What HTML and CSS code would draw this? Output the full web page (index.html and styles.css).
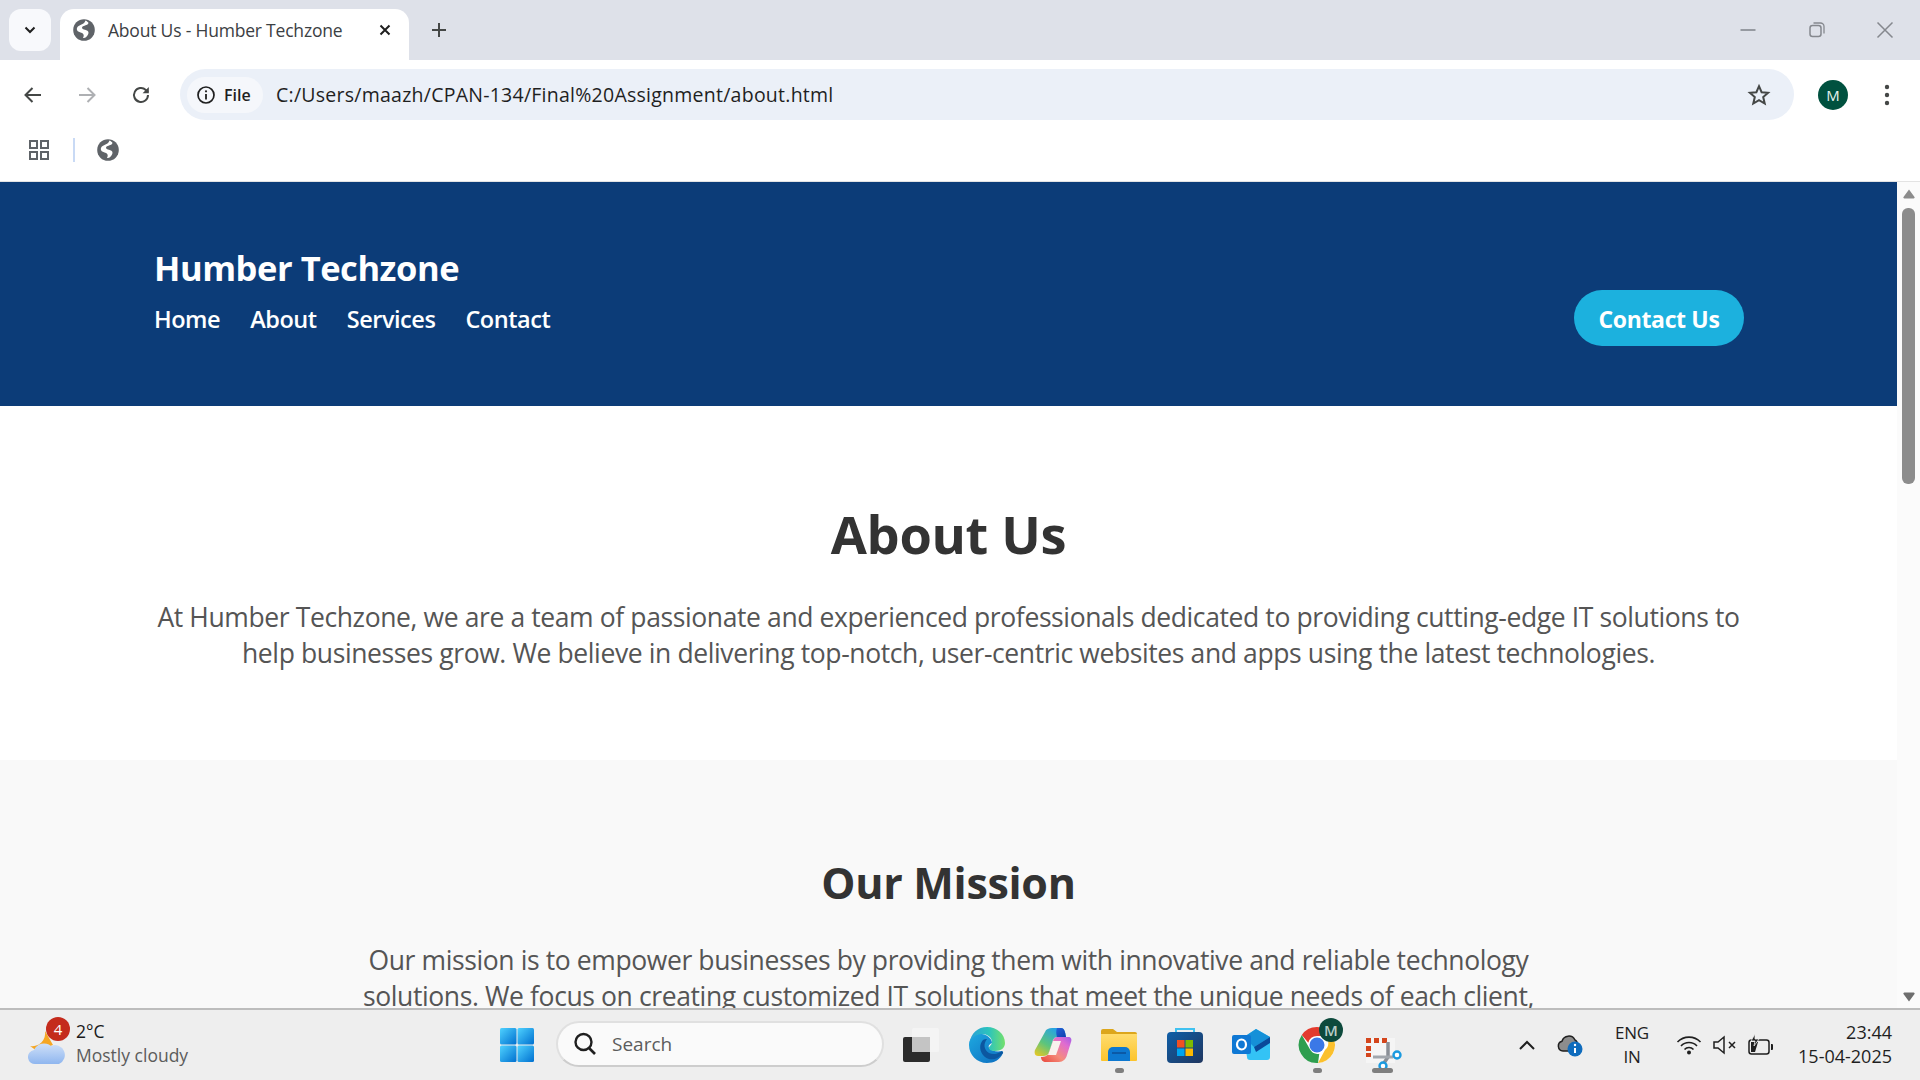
FILE: index.html
```html
<!DOCTYPE html>
<html lang="en">
<head>
<meta charset="utf-8">
<title>About Us - Humber Techzone</title>
<link rel="stylesheet" href="styles.css">
</head>
<body>
<svg class="defs" width="0" height="0">
  <defs>
    <symbol id="globe" viewBox="0 0 22 22">
      <circle cx="11" cy="11" r="10.800" fill="#5f6368"/>
      <path d="M12.500 1.500c1.500.8 2.500 1.500 3 2.500-.5 1.500-2 2-3.500 2.500-1.500.5-3 1-3 2.300 0 1.200 1.500 1.700 3 2 1.800.4 3.500 1.200 3.500 3 0 2-1.500 3-2.500 4.500-1 .8-2 .9-3 .7.500-1.200 1-2.300.5-3.500-.5-1.200-2-1.700-3.500-2.200C5.500 12.800 3.800 12 3.800 10c0-2 1.700-3.200 3.700-4 2-.8 4.200-1.700 5-4.500z" fill="#fff"/>
    </symbol>
    <linearGradient id="g-win" x1="0" y1="0" x2="1" y2="1"><stop offset="0" stop-color="#4fd2ff"/><stop offset="1" stop-color="#0070d0"/></linearGradient>
    <linearGradient id="g-edge" x1="0" y1="0" x2="1" y2="1"><stop offset="0" stop-color="#1ea9e0"/><stop offset="1" stop-color="#0d6cbf"/></linearGradient>
    <linearGradient id="g-edge2" x1="0" y1="0" x2="1" y2="0"><stop offset="0" stop-color="#2a9fd8"/><stop offset=".55" stop-color="#2cc4bc"/><stop offset="1" stop-color="#74e06c"/></linearGradient>
    <linearGradient id="g-folder" x1="0" y1="0" x2="0" y2="1"><stop offset="0" stop-color="#ffdc6e"/><stop offset="1" stop-color="#fcc42c"/></linearGradient>
    <linearGradient id="g-store" x1="0" y1="0" x2="1" y2="1"><stop offset="0" stop-color="#0f5fa8"/><stop offset="1" stop-color="#20365f"/></linearGradient>
    <linearGradient id="g-cloud" x1="0" y1="0" x2="0" y2="1"><stop offset="0" stop-color="#cfe0f8"/><stop offset="1" stop-color="#8fb6ef"/></linearGradient>
    <linearGradient id="g-cop1" x1="0" y1="0" x2="1" y2="1"><stop offset="0" stop-color="#2563d8"/><stop offset="1" stop-color="#0f3fae"/></linearGradient>
    <linearGradient id="g-cop2" x1="0" y1="1" x2=".7" y2="0"><stop offset="0" stop-color="#f2c81c"/><stop offset=".45" stop-color="#5cc57c"/><stop offset="1" stop-color="#22a0ec"/></linearGradient>
    <linearGradient id="g-cop3" x1="0" y1="1" x2="1" y2="0"><stop offset="0" stop-color="#e8463a"/><stop offset=".4" stop-color="#f58c7c"/><stop offset=".75" stop-color="#e06cd0"/><stop offset="1" stop-color="#a25ce8"/></linearGradient>
  </defs>
</svg>

<div class="browser-top">
  <div class="tabstrip">
    <div class="tab-search">
      <svg width="14" height="14" viewBox="0 0 14 14"><path d="M2.500 4.500 7 9l4.500-4.500" fill="none" stroke="#1f1f1f" stroke-width="2"/></svg>
    </div>
    <div class="tab">
      <svg class="fav" width="22" height="22"><use href="#globe"/></svg>
      <span class="tab-title">About Us - Humber Techzone</span>
      <svg class="tab-close" width="14" height="14" viewBox="0 0 14 14"><path d="M2.500 2.500l9 9M11.500 2.500l-9 9" stroke="#1f1f1f" stroke-width="2"/></svg>
    </div>
    <svg class="new-tab" width="18" height="18" viewBox="0 0 18 18"><path d="M9 2v14M2 9h14" stroke="#444746" stroke-width="2"/></svg>
    <div class="win-btns">
      <svg width="18" height="18" viewBox="0 0 18 18"><path d="M1.500 9h15" stroke="#85888e" stroke-width="1.600"/></svg>
      <svg width="18" height="18" viewBox="0 0 18 18"><rect x="2" y="4.500" width="11" height="11" rx="2.500" fill="none" stroke="#85888e" stroke-width="1.500"/><path d="M5.500 2h7a3.500 3.500 0 0 1 3.500 3.500v7" fill="none" stroke="#85888e" stroke-width="1.300"/></svg>
      <svg width="18" height="18" viewBox="0 0 18 18"><path d="M1.500 1.500l15 15M16.500 1.500l-15 15" stroke="#85888e" stroke-width="1.500"/></svg>
    </div>
  </div>
  <div class="toolbar">
    <svg class="tool" width="22" height="22" viewBox="0 0 22 22"><path d="M19 11H4M10.500 4 3.500 11l7 7" fill="none" stroke="#444746" stroke-width="2"/></svg>
    <svg class="tool" width="22" height="22" viewBox="0 0 22 22"><path d="M3 11h15M11.500 4l7 7-7 7" fill="none" stroke="#aeb0b3" stroke-width="2"/></svg>
    <svg class="tool" width="22" height="22" viewBox="0 0 22 22"><path d="M18 11a7 7 0 1 1-2.200-5.100L18 8" fill="none" stroke="#444746" stroke-width="2"/><path d="M18.800 3v6.200h-6.200z" fill="#444746"/></svg>
    <div class="omnibox">
      <div class="chip">
        <svg width="20" height="20" viewBox="0 0 20 20"><circle cx="10" cy="10" r="8" fill="none" stroke="#1f1f1f" stroke-width="1.700"/><path d="M10 9v5.500" stroke="#1f1f1f" stroke-width="1.800"/><circle cx="10" cy="6.300" r="1.100" fill="#1f1f1f"/></svg>
        <span>File</span>
      </div>
      <span class="url">C:/Users/maazh/CPAN-134/Final%20Assignment/about.html</span>
      <svg class="star" width="24" height="24" viewBox="0 0 24 24"><path d="M12 3.200l2.600 6 6.500.6-4.900 4.300 1.500 6.400-5.700-3.400-5.700 3.400 1.500-6.400-4.900-4.300 6.500-.6z" fill="none" stroke="#444746" stroke-width="2" stroke-linejoin="miter"/></svg>
    </div>
    <div class="avatar">M</div>
    <svg class="kebab" width="6" height="24" viewBox="0 0 6 24"><circle cx="3" cy="4" r="2.200" fill="#444746"/><circle cx="3" cy="12" r="2.200" fill="#444746"/><circle cx="3" cy="20" r="2.200" fill="#444746"/></svg>
  </div>
  <div class="bookmarks">
    <svg width="22" height="22" viewBox="0 0 22 22"><g fill="none" stroke="#5f6368" stroke-width="2"><rect x="2" y="2" width="7" height="7"/><rect x="13" y="2" width="7" height="7"/><rect x="2" y="13" width="7" height="7"/><rect x="13" y="13" width="7" height="7"/></g></svg>
    <span class="bm-sep"></span>
    <svg width="22" height="22"><use href="#globe"/></svg>
  </div>
</div>

<div class="viewport">
  <div class="page">
    <header class="site-header">
      <div class="brand-col">
        <div class="brand">Humber Techzone</div>
        <nav class="nav"><a>Home</a><a>About</a><a>Services</a><a>Contact</a></nav>
      </div>
      <a class="cta">Contact Us</a>
    </header>
    <section class="about">
      <h1>About Us</h1>
      <p>At Humber Techzone, we are a team of passionate and experienced professionals dedicated to providing cutting-edge IT solutions to help businesses grow. We believe in delivering top-notch, user-centric websites and apps using the latest technologies.</p>
    </section>
    <section class="mission">
      <h2>Our Mission</h2>
      <p>Our mission is to empower businesses by providing them with innovative and reliable technology solutions. We focus on creating customized IT solutions that meet the unique needs of each client,</p>
    </section>
  </div>
  <div class="scrollbar">
    <svg width="14" height="11" viewBox="0 0 14 11"><path d="M7 1.500l5.500 7.500a1 1 0 0 1-1 1.500h-9a1 1 0 0 1-1-1.500z" fill="#8c8c8c"/></svg>
    <div class="thumb"></div>
    <svg class="sb-down" width="14" height="11" viewBox="0 0 14 11"><path d="M7 9.500L12.500 2a1 1 0 0 0-1-1.500h-9a1 1 0 0 0-1 1.500z" fill="#6e6e6e"/></svg>
  </div>
</div>

<footer class="taskbar">
  <div class="weather">
    <div class="weather-icon">
      <svg width="38" height="36" viewBox="0 0 38 36"><path d="M17 2a13 13 0 0 1-15 15l7 5 16-6z" fill="#f5a623"/><path d="M8 35a7 7 0 0 1-2-14 11 11 0 0 1 17-4 9 9 0 0 1 8 18z" fill="url(#g-cloud)"/></svg>
      <span class="w-badge">4</span>
    </div>
    <div class="w-text"><div class="w-temp">2°C</div><div class="w-cond">Mostly cloudy</div></div>
  </div>
  <div class="slot">
    <svg width="36" height="36" viewBox="0 0 36 36"><g fill="url(#g-win)"><rect x="1" y="1" width="16.500" height="16.500" rx="1.500"/><rect x="18.500" y="1" width="16.500" height="16.500" rx="1.500"/><rect x="1" y="18.500" width="16.500" height="16.500" rx="1.500"/><rect x="18.500" y="18.500" width="16.500" height="16.500" rx="1.500"/></g></svg>
  </div>
  <div class="searchbox">
    <svg width="24" height="24" viewBox="0 0 24 24"><circle cx="10.500" cy="10" r="8" fill="none" stroke="#1f1f1f" stroke-width="2.400"/><path d="M16 16l6 6" stroke="#1f1f1f" stroke-width="2.600"/></svg>
    <span>Search</span>
  </div>
  <div class="slot">
    <svg width="38" height="36" viewBox="0 0 38 36"><rect x="1" y="10" width="27" height="25" rx="2" fill="#2b2b2b"/><rect x="10" y="1" width="27" height="24" rx="1.500" fill="#f4f4f4" fill-opacity=".85"/><rect x="10" y="10" width="18" height="15" fill="#c4c4c4"/></svg>
  </div>
  <div class="slot">
    <svg width="38" height="38" viewBox="0 0 38 38">
      <path d="M1 19C1 12 7 7 14 8c6 1 10 5 10 9-3 1-4 3-3 5 2 3 8 4 13 3l1 2c-3 7-9 10-16 10C9 37 1 29 1 19z" fill="url(#g-edge)"/>
      <path d="M1.500 17C3 7 10 1 19 1c10 0 18 7 18 16 0 5-4 8-10 8-4 0-6-1-6-3 0-2 3-3 3-6 0-5-5-8-10-8C8 8 3 12 1.500 17z" fill="url(#g-edge2)"/>
      <path d="M15 14c-4 4-4 12 2 17 5 4 13 3 18-4 .5-1-.5-2-1.500-1.500C30 28 25 29 21 27c-5-3-6-9-2-14-1 0-3 0-4 1z" fill="#0c57a0"/>
    </svg>
  </div>
  <div class="slot">
    <svg width="38" height="36" viewBox="0 0 38 36">
      <path d="M23 10h11c3 0 4 2 3 5l-4 13c-1 4-4 7-8 7H12c-3 0-5-2-5-5 4 0 7-1 8-5l4-11c1-3 2-4 4-4z" fill="url(#g-cop3)"/>
      <path d="M19 14h8l-5 14h-8z" fill="#f8f2ee"/>
      <path d="M11 5c1-3 4-4 7-4h9c3 0 4 3 5 9h-9c-2 0-3 1-4 3l-4 12c-1 3-3 4-6 4H4c-3 0-4-3-3-6z" fill="url(#g-cop2)"/>
      <path d="M23 1h4c3 0 4 3 5 9h-9c-1-3-1-7 0-9z" fill="url(#g-cop1)"/>
    </svg>
  </div>
  <div class="slot">
    <svg width="36" height="34" viewBox="0 0 36 34"><path d="M0 3a2 2 0 0 1 2-2h10l4 3h18a2 2 0 0 1 2 2v6H0z" fill="#dca61c"/><path d="M0 6h36v26a1 1 0 0 1-1 1H1a1 1 0 0 1-1-1z" fill="url(#g-folder)"/><path d="M7 33V24a5 5 0 0 1 5-5h12a5 5 0 0 1 5 5v9z" fill="#0d78d0"/><path d="M11 25h14" stroke="#0b4f98" stroke-width="1.500"/></svg>
    <span class="ind"></span>
  </div>
  <div class="slot">
    <svg width="36" height="36" viewBox="0 0 36 36"><path d="M9 7V2h18v5" fill="none" stroke="#3fc1f0" stroke-width="2"/><rect x="0" y="5" width="36" height="31" rx="4" fill="url(#g-store)"/><rect x="10" y="13" width="7.500" height="7.500" fill="#f25022"/><rect x="18.500" y="13" width="7.500" height="7.500" fill="#7fba00"/><rect x="10" y="21.500" width="7.500" height="7.500" fill="#00a4ef"/><rect x="18.500" y="21.500" width="7.500" height="7.500" fill="#ffb900"/></svg>
  </div>
  <div class="slot">
    <svg width="38" height="32" viewBox="0 0 38 32"><path d="M12 8l12-8 14 8v20a3 3 0 0 1-3 3H18a3 3 0 0 1-3-3z" fill="#33c3f5"/><path d="M12 8l12-8 14 8-16 10z" fill="#1590d8"/><path d="M22 18l16-10v6L24 23z" fill="#0a4a9a"/><rect x="0" y="6" width="19" height="19" rx="2" fill="#0f78d4"/><ellipse cx="9.500" cy="15.500" rx="4.500" ry="5" fill="none" stroke="#fff" stroke-width="2.200"/></svg>
  </div>
  <div class="slot">
    <svg width="38" height="38" viewBox="0 0 38 38"><circle cx="19" cy="19" r="18" fill="#fff"/><path d="M19 1a18 18 0 0 1 15.600 9H19a9 9 0 0 0-8.700 6.700L3.800 9A18 18 0 0 1 19 1z" fill="#e33b2e"/><path d="M34.600 10A18 18 0 0 1 20 37l7-13a9 9 0 0 0 0-14z" fill="#fbc02d"/><path d="M3.800 9l8 14a9 9 0 0 0 9.500 4.700L20 37A18 18 0 0 1 3.800 9z" fill="#2e9e4f"/><circle cx="19" cy="19" r="7.500" fill="#3b78e7"/></svg>
    <span class="chrome-badge">M</span>
    <span class="ind"></span>
  </div>
  <div class="slot">
    <svg class="snip" width="40" height="36" viewBox="0 0 40 36">
      <rect x="3" y="3" width="29" height="25" fill="#f5f5f5"/>
      <g fill="#d4451c"><rect x="3" y="3" width="5" height="5"/><rect x="11" y="3" width="5" height="5"/><rect x="19" y="3" width="5" height="5"/><rect x="3" y="11" width="5" height="5"/><rect x="3" y="18" width="5" height="4"/></g>
      <path d="M25 7v15M25 22l-4 6" fill="none" stroke="#8a8f96" stroke-width="3.500"/>
      <path d="M10 22h20" stroke="#a2a7ad" stroke-width="3"/>
      <circle cx="34" cy="20" r="3.500" fill="#fff" stroke="#1a9ae0" stroke-width="2.400"/>
      <circle cx="20" cy="31" r="3.500" fill="#fff" stroke="#1a9ae0" stroke-width="2.400"/>
    </svg>
    <span class="ind ind-wide"></span>
  </div>
  <div class="tray">
    <div class="t-chev"><svg width="18" height="12" viewBox="0 0 18 12"><path d="M2 10l7-7 7 7" fill="none" stroke="#1f1f1f" stroke-width="2"/></svg></div>
    <div class="t-od"><svg width="26" height="24" viewBox="0 0 26 24"><path d="M6 18a5 5 0 0 1-1-9.800A7 7 0 0 1 18 7a5 5 0 0 1 2 2v5l-6 4z" fill="#8d8d8d" stroke="#1f1f1f" stroke-width="1.500"/><circle cx="18" cy="16" r="7.500" fill="#0f6cbd"/><path d="M18 15v5" stroke="#fff" stroke-width="2"/><circle cx="18" cy="12" r="1.200" fill="#fff"/></svg></div>
    <div class="t-lang"><div>ENG</div><div>IN</div></div>
    <div class="t-ico"><svg width="26" height="20" viewBox="0 0 26 20"><g fill="none" stroke="#1f1f1f" stroke-width="1.600"><path d="M1.500 7a16 16 0 0 1 23 0"/><path d="M5 11a11 11 0 0 1 16 0"/><path d="M8.500 14.500a6 6 0 0 1 9 0"/></g><circle cx="13" cy="17.500" r="2" fill="#1f1f1f"/></svg></div>
    <div class="t-ico"><svg width="24" height="20" viewBox="0 0 24 20"><path d="M1 7h4l6-5v16l-6-5H1z" fill="none" stroke="#1f1f1f" stroke-width="1.500"/><path d="M16 7l6 6M22 7l-6 6" stroke="#1f1f1f" stroke-width="1.500"/></svg></div>
    <div class="t-ico"><svg width="26" height="24" viewBox="0 0 26 24"><rect x="1" y="7" width="20" height="14" rx="2.500" fill="none" stroke="#1f1f1f" stroke-width="1.500"/><path d="M23 11h1a1 1 0 0 1 1 1v4a1 1 0 0 1-1 1h-1z" fill="#1f1f1f"/><path d="M3 9h7l-3 10H3z" fill="#1f1f1f"/><path d="M7 1L3 8h4l-1 5 5-7H7z" fill="#1f1f1f" stroke="#eee" stroke-width=".8"/></svg></div>
    <div class="t-clock"><div>23:44</div><div>15-04-2025</div></div>
  </div>
</footer>
</body>
</html>
```
FILE: styles.css
```css
* { box-sizing: border-box; }
html, body { margin: 0; height: 100%; }
body {
  height: 1080px;
  overflow: hidden;
  display: flex;
  flex-direction: column;
  font-family: "Open Sans", "Noto Sans", "Liberation Sans", sans-serif;
  background: #fff;
}
.defs { position: absolute; }

/* Browser chrome */
.browser-top { flex: none; height: 182px; background: #fff; border-bottom: 1px solid #e3e3e3; }
.tabstrip {
  height: 60px;
  background: #dee1e9;
  display: flex;
  align-items: flex-start;
  padding: 9px 0 0 9px;
}
.tab-search {
  width: 42px;
  height: 42px;
  background: #f8f9fc;
  border-radius: 12px;
  display: flex;
  align-items: center;
  justify-content: center;
}
.tab {
  width: 349px;
  height: 51px;
  margin-left: 9px;
  background: #fff;
  border-radius: 14px 14px 0 0;
  display: flex;
  align-items: center;
  padding: 0 17px 9px 13px;
}
.fav { flex: none; }
.tab-title { margin-left: 13px; font-size: 17.500px; color: #3c4043; flex: 1; letter-spacing: -0.2px; white-space: nowrap; }
.new-tab { margin: 12px 0 0 21px; }
.win-btns {
  margin-left: auto;
  width: 190px;
  height: 40px;
  padding: 1px 26px 0 9px;
  display: flex;
  justify-content: space-between;
  align-items: center;
}
.win-btns svg { flex: none; }
.toolbar {
  height: 75px;
  border-radius: 12px 12px 0 0;
  display: flex;
  align-items: center;
  padding: 0 0 6px 22px;
}
.tool { margin-right: 32px; flex: none; }
.omnibox {
  margin-left: -4px;
  width: 1614px;
  height: 51px;
  border-radius: 26px;
  background: #ebf0f8;
  display: flex;
  align-items: center;
  padding: 0 23px 0 7px;
}
.chip {
  width: 76px;
  height: 36px;
  border-radius: 18px;
  background: #f5f7fb;
  display: flex;
  align-items: center;
  padding-left: 9px;
  gap: 8px;
  font-size: 16px;
  font-weight: 600;
  color: #1f1f1f;
}
.url { margin-left: 13px; font-size: 19.500px; color: #1f1f1f; letter-spacing: 0.25px; white-space: nowrap; flex: 1; }
.star { flex: none; }
.avatar {
  width: 30px;
  height: 30px;
  margin-left: 24px;
  border-radius: 50%;
  background: #00513f;
  color: #e6f2ee;
  font-size: 15px;
  display: flex;
  align-items: center;
  justify-content: center;
  flex: none;
}
.kebab { margin-left: 36px; flex: none; }
.bookmarks {
  height: 46px;
  display: flex;
  align-items: center;
  padding: 0 0 16px 28px;
}
.bm-sep { width: 2px; height: 24px; background: #c9daf5; margin: 0 22px 0 23px; }

/* Page + scrollbar */
.viewport { flex: none; height: 826px; display: flex; overflow: hidden; }
.page { width: 1897px; flex: none; overflow: hidden; background: #f9f9f9; }
.scrollbar {
  flex: 1;
  background: #fbfbfb;
  display: flex;
  flex-direction: column;
  align-items: center;
  padding-top: 6px;
  padding-bottom: 5px;
}
.thumb { width: 13px; height: 276px; margin-top: 9px; background: #8c8c8c; border-radius: 6px; }
.sb-down { margin-top: auto; }

.site-header {
  height: 224px;
  background: #0c3c78;
  color: #fff;
  display: flex;
  justify-content: space-between;
  align-items: flex-start;
  padding: 62px 153px 0 154px;
}
.brand { font-size: 34.500px; font-weight: 700; line-height: 48px; letter-spacing: -0.45px; }
.nav { display: flex; gap: 30px; margin-top: 11px; font-size: 23.500px; font-weight: 600; line-height: 32px; letter-spacing: -0.45px; }
.cta {
  margin-top: 46px;
  width: 170px;
  height: 56px;
  padding-top: 2px;
  border-radius: 28px;
  background: #1cb1de;
  color: #fff;
  font-size: 23px;
  font-weight: 700;
  letter-spacing: -0.35px;
  display: flex;
  align-items: center;
  justify-content: center;
}
.about { height: 354px; background: #fff; text-align: center; padding: 95px 148px 0; }
h1 { margin: 0; font-size: 52.400px; line-height: 66px; font-weight: 700; color: #333; letter-spacing: -0.35px; }
.about p { margin: 32px 0 0; font-size: 26.500px; line-height: 36px; color: #555; letter-spacing: -0.39px; }
.mission { background: #f9f9f9; text-align: center; padding: 96px 348px 0; }
h2 { margin: 0; font-size: 43px; line-height: 54px; font-weight: 700; color: #333; letter-spacing: -0.3px; }
.mission p { margin: 32px 0 0; font-size: 26.500px; line-height: 36px; color: #555; letter-spacing: -0.39px; }

/* Taskbar */
.taskbar {
  flex: 1;
  background: #eeeeee;
  border-top: 2px solid #bdbdbd;
  display: flex;
  align-items: center;
  position: relative;
  font-size: 17px;
  color: #1f1f1f;
}
.weather { width: 484px; display: flex; align-items: center; padding-left: 28px; flex: none; }
.weather-icon { position: relative; width: 38px; height: 36px; margin-top: 4px; }
.weather-icon svg { display: block; }
.w-badge {
  position: absolute;
  top: -12px;
  left: 18px;
  width: 24px;
  height: 24px;
  border-radius: 50%;
  background: #c42b1c;
  color: #fff;
  font-size: 15px;
  display: flex;
  align-items: center;
  justify-content: center;
}
.w-text { margin-left: 10px; margin-top: -4px; font-size: 17.500px; line-height: 24px; }
.w-temp { color: #1a1a1a; }
.w-cond { color: #5c5c5c; }
.slot { position: relative; width: 66px; height: 60px; flex: none; display: flex; align-items: center; justify-content: center; }
.slot svg { display: block; }
.snip { margin-top: 16px; }
.searchbox {
  width: 328px;
  height: 46px;
  margin: -2px 4px 0 6px;
  border-radius: 23px;
  background: #fafafa;
  border: 2px solid #e0e0e0;
  border-bottom-color: #cdcdcd;
  display: flex;
  align-items: center;
  padding-left: 15px;
  gap: 15px;
  font-size: 19px;
  color: #5c5c5c;
  flex: none;
}
.ind { position: absolute; left: 29px; bottom: 2px; width: 9px; height: 5px; border-radius: 3px; background: #7e7e7e; }
.ind-wide { left: 22px; width: 21px; }
.chrome-badge {
  position: absolute;
  top: 3px;
  left: 35px;
  width: 24px;
  height: 24px;
  border-radius: 50%;
  background: #0d4a3c;
  color: #b8cdc6;
  font-size: 15px;
  font-weight: 600;
  display: flex;
  align-items: center;
  justify-content: center;
}
.tray { margin-left: 89px; display: flex; align-items: center; flex: none; }
.t-chev { width: 44px; display: flex; justify-content: center; }
.t-od { width: 42px; display: flex; justify-content: center; }
.t-lang { width: 80px; text-align: center; line-height: 24px; font-size: 17px; letter-spacing: -0.2px; padding-left: 2px; }
.t-ico { width: 36px; display: flex; justify-content: center; }
.t-clock { width: 141px; margin-top: -3px; text-align: right; padding-right: 28px; line-height: 24px; font-size: 18px; white-space: nowrap; }
```
